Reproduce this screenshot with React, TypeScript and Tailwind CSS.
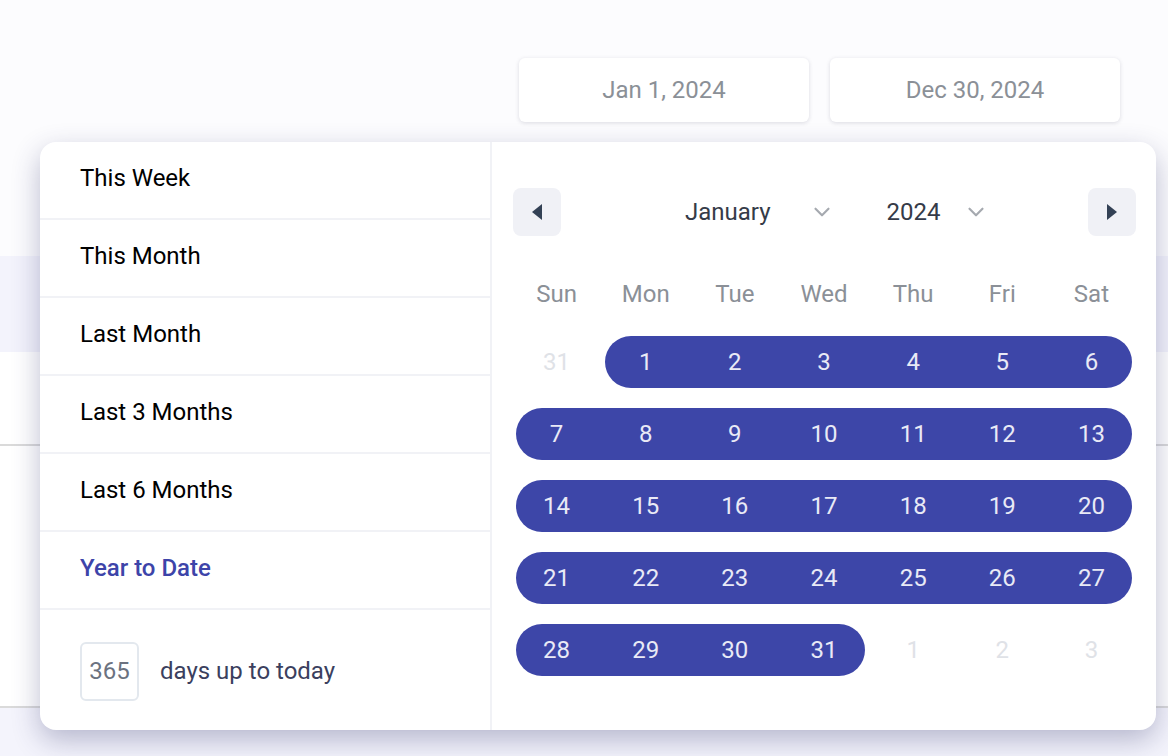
import { ChevronDown } from 'lucide-react';

const presets = ['This Week', 'This Month', 'Last Month', 'Last 3 Months', 'Last 6 Months'];
const weekdays = ['Sun', 'Mon', 'Tue', 'Wed', 'Thu', 'Fri', 'Sat'];

const colStart = ['col-start-1', 'col-start-2', 'col-start-3', 'col-start-4', 'col-start-5', 'col-start-6', 'col-start-7'];
const colEnd = ['col-end-1', 'col-end-2', 'col-end-3', 'col-end-4', 'col-end-5', 'col-end-6', 'col-end-7', 'col-end-8'];

type Day = { n: number; muted: boolean };

// 5 weeks of January 2024, with muted days from the neighbouring months
const weeks: Day[][] = [
  [31, 1, 2, 3, 4, 5, 6],
  [7, 8, 9, 10, 11, 12, 13],
  [14, 15, 16, 17, 18, 19, 20],
  [21, 22, 23, 24, 25, 26, 27],
  [28, 29, 30, 31, 1, 2, 3],
].map((w, wi) =>
  w.map((n, di) => ({ n, muted: (wi === 0 && di === 0) || (wi === 4 && di > 3) }))
);

const Triangle = ({ dir }: { dir: 'left' | 'right' }) => (
  <svg width="12" height="18" viewBox="0 0 12 18">
    {dir === 'left' ? <path d="M1 9 L11 1 L11 17 Z" fill="#334155" /> : <path d="M11 9 L1 1 L1 17 Z" fill="#334155" />}
  </svg>
);

const DateInput = ({ value }: { value: string }) => (
  <div className="w-[290px] h-[64px] bg-white rounded-[6px] shadow-[0_1px_4px_rgba(30,30,60,0.15)] flex items-center justify-center text-[24px] text-[#8b9097]">
    {value}
  </div>
);

const Week = ({ days }: { days: Day[] }) => {
  const first = days.findIndex((d) => !d.muted);
  let last = first;
  days.forEach((d, i) => {
    if (!d.muted) last = i;
  });
  return (
    <div className="grid grid-cols-7 h-[52px]">
      <div className={`row-start-1 ${colStart[first]} ${colEnd[last + 1]} mx-[4px] bg-[#3d46a8] rounded-full`} />
      {days.map((d, i) => (
        <div
          key={i}
          className={`row-start-1 ${colStart[i]} flex items-center justify-center text-[24px] ${d.muted ? 'text-[#dfe2e7]' : 'text-[#e9eaf6]'}`}
        >
          {d.n}
        </div>
      ))}
    </div>
  );
};

export default function App() {
  return (
    <div className="relative w-[1168px] h-[756px] overflow-hidden bg-[#fcfcfe] font-['Roboto',sans-serif]">
      {/* page content behind the popup */}
      <div className="flex flex-col">
        <div className="h-[256px] flex justify-end gap-[21px] pt-[58px] pr-[48px]">
          <DateInput value="Jan 1, 2024" />
          <DateInput value="Dec 30, 2024" />
        </div>
        <div className="h-[96px] bg-[#f3f3fc]" />
        <div className="h-[94px] bg-white border-b-2 border-[#dadada]" />
        <div className="h-[262px] bg-white border-b-2 border-[#dadada]" />
        <div className="h-[60px] bg-[#f4f4fc]" />
      </div>

      {/* range picker popup */}
      <div className="absolute left-[40px] top-[142px] w-[1116px] h-[588px] bg-white rounded-[16px] shadow-[0_10px_28px_rgba(50,52,110,0.32)] flex overflow-hidden">
        <div className="w-[452px] border-r-2 border-[#f1f2f6] flex flex-col">
          {presets.map((p) => (
            <div key={p} className="h-[78px] border-b-2 border-[#f1f2f6] flex items-center pl-[40px] pb-[4px] text-[24px] text-black">
              {p}
            </div>
          ))}
          <div className="h-[78px] border-b-2 border-[#f1f2f6] flex items-center pl-[40px] pb-[4px] text-[24px] font-medium text-[#3d44a9]">
            Year to Date
          </div>
          <div className="flex-1 flex items-center pl-[40px] pt-[2px] gap-[21px]">
            <div className="w-[59px] h-[59px] rounded-[6px] border-2 border-[#e3e8ee] flex items-center justify-center text-[24px] text-[#6b7280]">
              365
            </div>
            <span className="text-[24px] text-[#3b3f5e]">days up to today</span>
          </div>
        </div>

        <div className="flex-1 flex flex-col pt-[46px] pl-[20px] pr-[20px]">
          <div className="flex items-center pl-[1px]">
            <div className="w-[48px] h-[48px] rounded-[8px] bg-[#f0f1f6] flex items-center justify-center">
              <Triangle dir="left" />
            </div>
            <div className="flex items-center text-[24px] text-[#353b48] ml-[124px]">
              <span>January</span>
              <ChevronDown className="ml-[38px] w-[26px] h-[26px] text-[#a6aab0]" strokeWidth={2} />
              <span className="ml-[52px]">2024</span>
              <ChevronDown className="ml-[22px] w-[26px] h-[26px] text-[#a6aab0]" strokeWidth={2} />
            </div>
            <div className="ml-auto w-[48px] h-[48px] rounded-[8px] bg-[#f0f1f6] flex items-center justify-center">
              <Triangle dir="right" />
            </div>
          </div>

          <div className="grid grid-cols-7 h-[40px] items-center mt-[38px]">
            {weekdays.map((d) => (
              <div key={d} className="text-center text-[24px] text-[#8b9097]">
                {d}
              </div>
            ))}
          </div>
          <div className="flex flex-col gap-[20px] mt-[22px]">
            {weeks.map((w, i) => (
              <Week key={i} days={w} />
            ))}
          </div>
        </div>
      </div>
    </div>
  );
}
